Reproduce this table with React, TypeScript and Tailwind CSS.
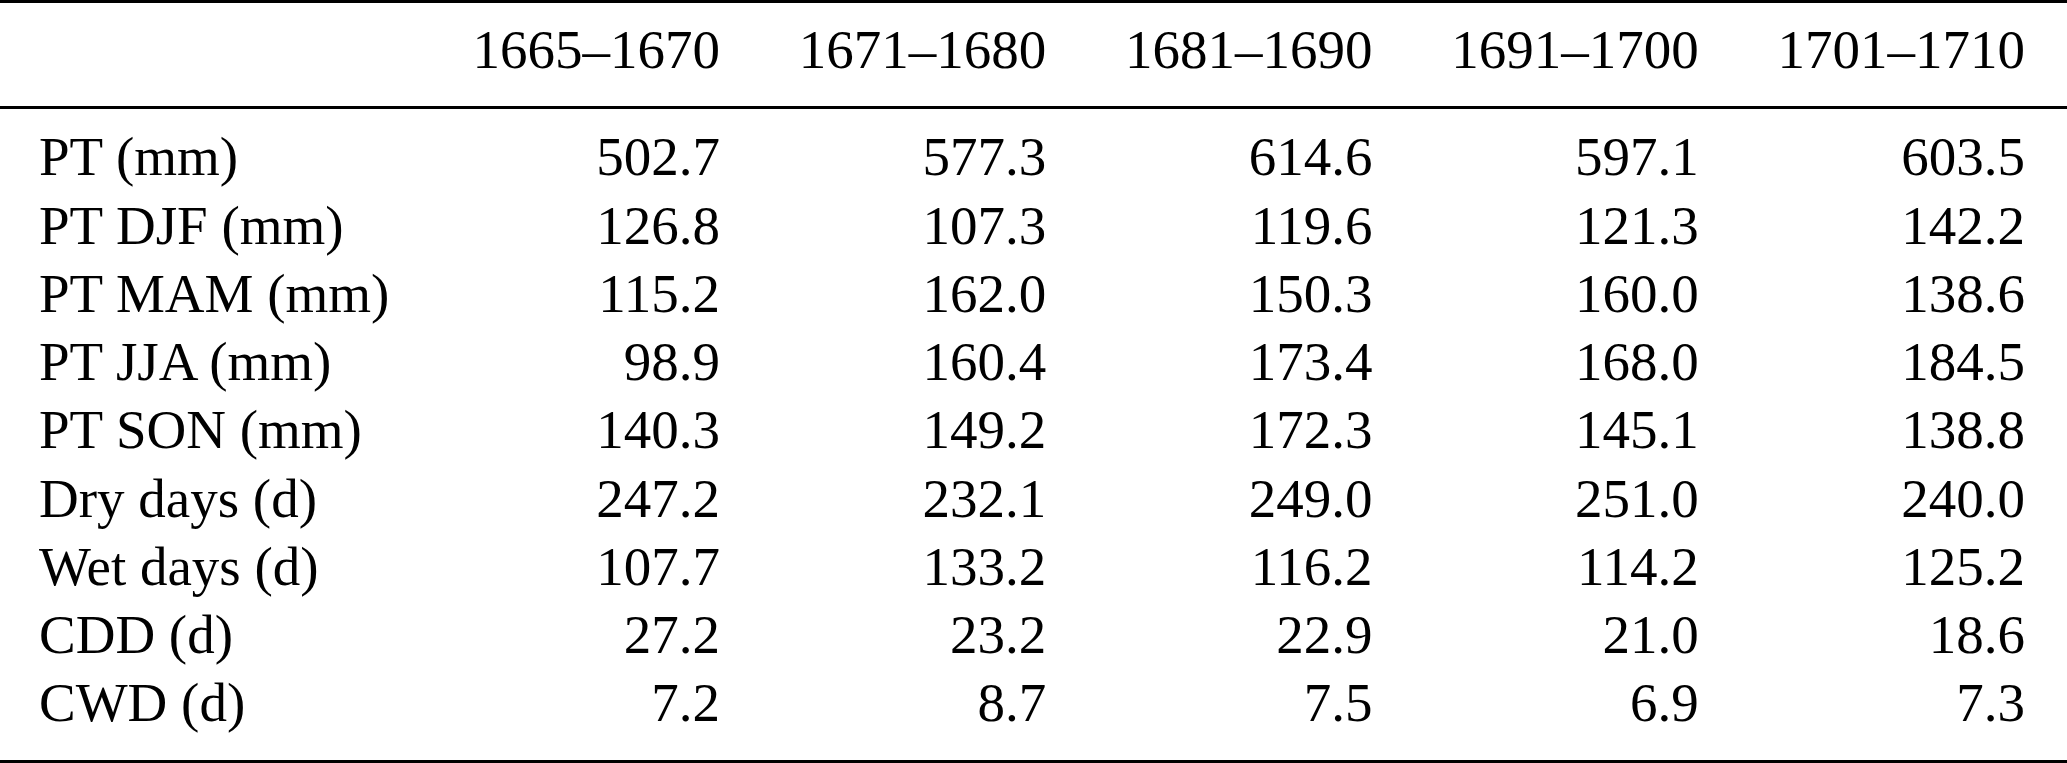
const periods = ["1665–1670", "1671–1680", "1681–1690", "1691–1700", "1701–1710"];

const rows: [string, string[]][] = [
  ["PT (mm)", ["502.7", "577.3", "614.6", "597.1", "603.5"]],
  ["PT DJF (mm)", ["126.8", "107.3", "119.6", "121.3", "142.2"]],
  ["PT MAM (mm)", ["115.2", "162.0", "150.3", "160.0", "138.6"]],
  ["PT JJA (mm)", ["98.9", "160.4", "173.4", "168.0", "184.5"]],
  ["PT SON (mm)", ["140.3", "149.2", "172.3", "145.1", "138.8"]],
  ["Dry days (d)", ["247.2", "232.1", "249.0", "251.0", "240.0"]],
  ["Wet days (d)", ["107.7", "133.2", "116.2", "114.2", "125.2"]],
  ["CDD (d)", ["27.2", "23.2", "22.9", "21.0", "18.6"]],
  ["CWD (d)", ["7.2", "8.7", "7.5", "6.9", "7.3"]],
];

function Row({ label, cells }: { label: string; cells: string[] }) {
  return (
    <div className="grid grid-cols-[1fr_repeat(5,326.25px)] pl-[39px] pr-[42px] h-[68.25px] leading-[68.25px]">
      <div className="whitespace-nowrap">{label}</div>
      {cells.map((c, i) => (
        <div key={i} className="text-right whitespace-nowrap">
          {c}
        </div>
      ))}
    </div>
  );
}

export default function App() {
  return (
    <div className="w-[2067px] h-[763px] bg-white text-black font-['Liberation_Serif','Times_New_Roman',serif] text-[55px] overflow-hidden">
      {/* top rule */}
      <div className="h-[3px] bg-black" />

      {/* header */}
      <div className="pt-[13px] pb-[22px]">
        <Row label="" cells={periods} />
      </div>

      {/* mid rule */}
      <div className="h-[3px] bg-black" />

      {/* body */}
      <div className="pt-[14px] pb-[22px]">
        {rows.map(([label, cells]) => (
          <Row key={label} label={label} cells={cells} />
        ))}
      </div>

      {/* bottom rule */}
      <div className="h-[3px] bg-black" />
    </div>
  );
}
